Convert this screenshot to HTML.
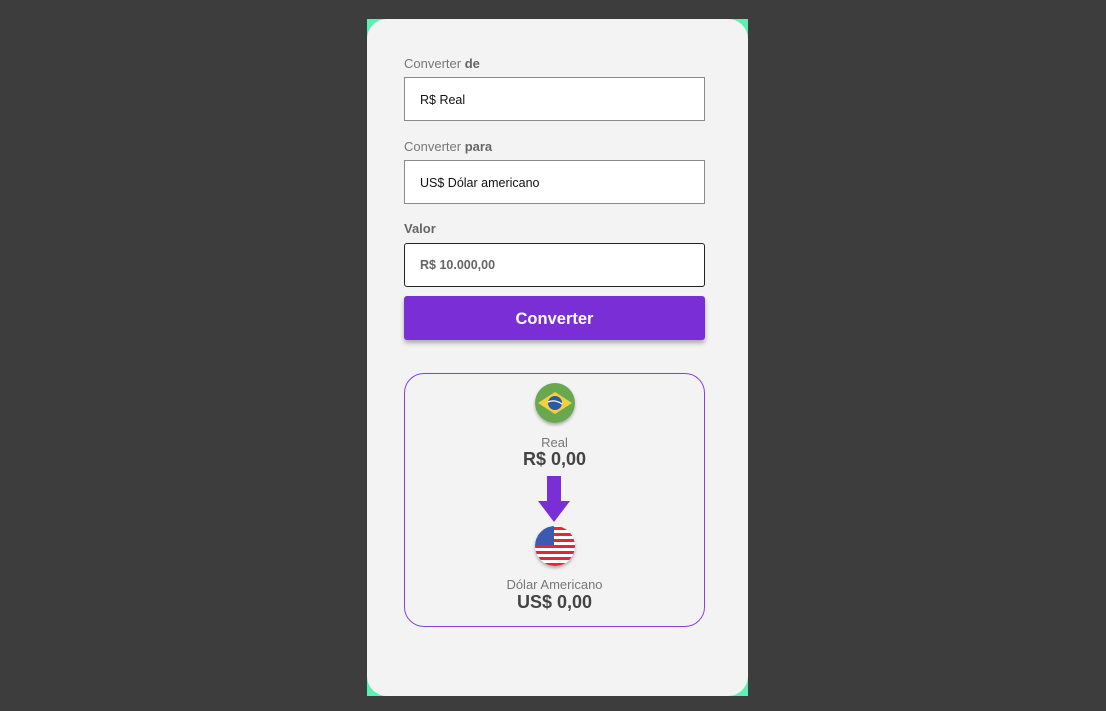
<!DOCTYPE html>
<html><head><style>
body{margin:0;width:1106px;height:711px;background:#3d3d3d;font-family:"Liberation Sans",sans-serif;position:relative;overflow:hidden}
.bgc{position:absolute;left:367px;top:19px;width:381px;height:677px;background:#5cf0b4}
.card{position:absolute;left:367px;top:19px;width:381px;height:677px;background:#f3f3f3;border-radius:20px}
.lbl{position:absolute;left:404px;font-size:13px;color:#777}
.lbl b{color:#666}
.inp{position:absolute;left:404px;width:299px;height:42px;background:#fff;border:1px solid #8a8a8a;font-size:12.5px;color:#111;line-height:45px;box-sizing:content-box}
.inp span{margin-left:15px}
.btn{position:absolute;left:404px;top:296px;width:301px;height:44px;background:#7a2fd6;border-radius:3px;color:#fff;font-weight:bold;font-size:16.5px;text-align:center;line-height:46px;box-shadow:0 3px 5px rgba(0,0,0,.3)}
.res{position:absolute;left:404px;top:373px;width:299px;height:252px;border:1px solid #8a3ee0;border-radius:20px}
.t{position:absolute;left:404px;width:301px;text-align:center;color:#444}
</style></head><body>
<div class="bgc"></div><div class="card"></div>
<div class="lbl" style="top:56px">Converter <b>de</b></div>
<div class="inp" style="top:77px"><span>R$ Real</span></div>
<div class="lbl" style="top:139px">Converter <b>para</b></div>
<div class="inp" style="top:160px"><span>US$ Dólar americano</span></div>
<div class="lbl" style="top:221px"><b>Valor</b></div>
<div class="inp" style="top:243px;border-color:#222;border-radius:3px;color:#666;font-weight:bold;line-height:43px"><span>R$ 10.000,00</span></div>
<div class="btn">Converter</div>
<div class="res"></div>
<svg style="position:absolute;left:0;top:0" width="1106" height="711">
<defs><clipPath id="c2"><circle cx="555" cy="546" r="20"/></clipPath>
<filter id="sh"><feDropShadow dx="0" dy="2" stdDeviation="1.5" flood-opacity=".3"/></filter></defs>
<circle cx="555" cy="403" r="20" fill="#6aa84f" filter="url(#sh)"/>
<polygon points="538,403 555,392 572,403 555,414" fill="#f4d03f"/>
<circle cx="555" cy="403" r="7" fill="#2c5aa0"/>
<path d="M548,402 Q555,399 562,404" stroke="#fff" stroke-width="1.3" fill="none"/>
<g filter="url(#sh)"><circle cx="555" cy="546" r="20" fill="#fff"/></g>
<g clip-path="url(#c2)">
<rect x="530" y="526" width="50" height="40" fill="#fff"/>
<rect x="530" y="527" width="50" height="3" fill="#e0283c"/>
<rect x="530" y="533" width="50" height="3" fill="#e0283c"/>
<rect x="530" y="539" width="50" height="3" fill="#e0283c"/>
<rect x="530" y="545" width="50" height="3" fill="#e0283c"/>
<rect x="530" y="551" width="50" height="3" fill="#e0283c"/>
<rect x="530" y="557" width="50" height="3" fill="#e0283c"/>
<rect x="530" y="563" width="50" height="3" fill="#e0283c"/>
<rect x="530" y="526" width="24" height="19" fill="#3c5bb0"/>
</g>
<polygon points="547,476 561,476 561,501 570,501 554,522 538,501 547,501" fill="#7a2fd6"/>
</svg>
<div class="t" style="top:435px;font-size:13px;color:#777">Real</div>
<div class="t" style="top:449px;font-size:18px;font-weight:bold">R$ 0,00</div>
<div class="t" style="top:577px;font-size:13px;color:#777">Dólar Americano</div>
<div class="t" style="top:592px;font-size:18px;font-weight:bold">US$ 0,00</div>
</body></html>
